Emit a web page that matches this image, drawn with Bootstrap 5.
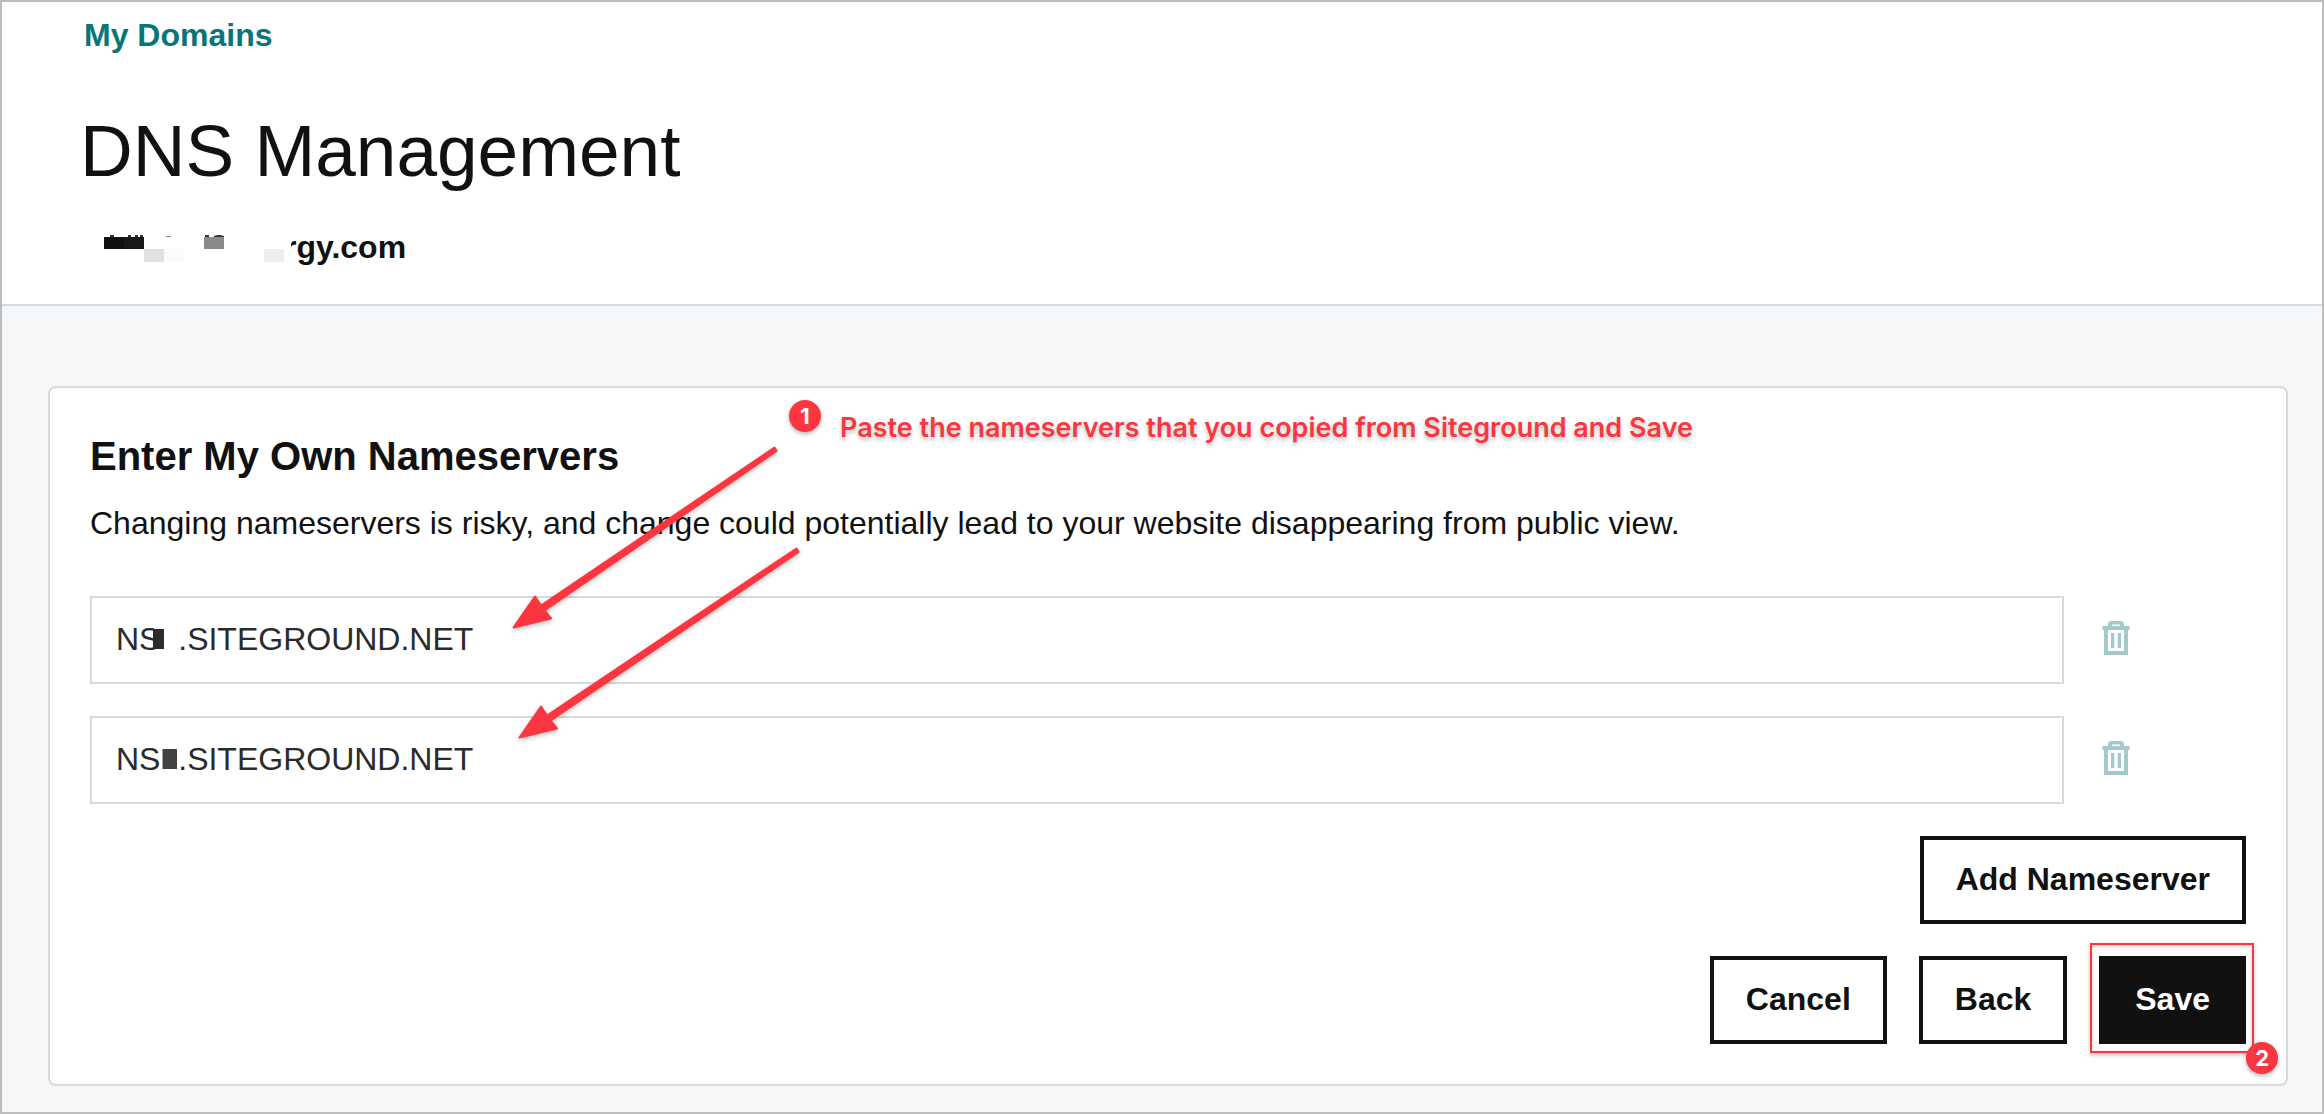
<!DOCTYPE html>
<html lang="en">
<head>
<meta charset="utf-8">
<meta name="viewport" content="width=device-width, initial-scale=1">
<title>DNS Management</title>
<link rel="stylesheet" href="https://cdn.jsdelivr.net/npm/bootstrap@5.3.0/dist/css/bootstrap.min.css">
<style>
  body {
    font-family: "Liberation Sans", Arial, sans-serif;
    font-size: 32px;
    line-height: 48px;
    color: #111;
    background: #f5f7f8;
    border: 2px solid #bdbdbd;
  }
  .page-head { padding: 9px 78px 33px; border-bottom: 2px solid #d4dbe0; }
  .crumb { color: #09757a; padding-left: 4px; }
  .page-title { font-size: 73px; line-height: 88px; font-weight: 400; margin: 48px 0 28px; }
  .domain-name { padding-left: 204px; }
  .domain-mask { left: 3px; top: 0; }
  .page-main { padding: 80px 34px 26px 46px; }
  .ns-card { border: 2px solid #d4dbe0; border-radius: 8px; padding: 40px; }
  .ns-title { font-size: 40px; line-height: 56px; margin-bottom: 15px; }
  .ns-intro { margin-bottom: 49px; }
  .stack { gap: 32px; }
  .ns-field.form-control {
    height: 88px; padding: 0 24px 2px; font-size: 32px; color: #2b2b2b;
    border: 2px solid #d4dbe0; border-radius: 0;
  }
  .digit-mask { left: 60px; top: 26px; }
  .trash-btn { width: 60px; margin: 0 100px 0 22px; }
  .action.btn {
    height: 88px; padding: 0 32px 2px; font-size: 32px; font-weight: 700; line-height: 48px;
    border: 4px solid #111; border-radius: 0; color: #111; background: #fff;
  }
  .action.action-main { background: #111; color: #fff; }
  .save-frame {
    inset: -13px -8px -9px -9px; border: 2px solid #fb3640;
    box-shadow: 0 2px 4px rgba(0,0,0,.25), inset 0 2px 4px rgba(0,0,0,.15);
    pointer-events: none;
  }
  .step {
    width: 32px; height: 32px; border-radius: 50%; background: #fb3640; color: #fff;
    font: 700 22px/32px Inter, sans-serif; text-align: center;
    box-shadow: 0 2px 4px rgba(0,0,0,.3);
  }
  .step-two { left: 147px; top: 86px; }
  .step-one { left: 739px; top: 12px; }
  .note-text {
    left: 790px; top: 20px; font: 600 27px/40px Inter, sans-serif; color: #fb3640;
    text-shadow: 0 3px 4px rgba(0,0,0,.25); white-space: nowrap;
  }
  .arrows { left: 0; top: 0; pointer-events: none; filter: drop-shadow(0 2px 2px rgba(0,0,0,.25)); }
</style>
</head>
<body class="min-vh-100 d-flex flex-column">
<header class="page-head bg-white">
  <a href="#" class="crumb fw-bold text-decoration-none d-block">My Domains</a>
  <h1 class="page-title">DNS Management</h1>
  <div class="domain-name position-relative fw-bold">rgy.com
    <svg class="domain-mask position-absolute" width="208" height="48" viewBox="83 223 208 48" aria-hidden="true">
      <path fill="#fff" d="M83 223h208v48H83z"/>
      <path fill="#333" d="M110 235h4v2h-4zM128 235h3v2h-3zM135 235h3v2h-3zM140 235h3v2h-3zM205 235h4v2h-4zM214 236q5-2 10 0v1h-10z"/>
      <path fill="#888" d="M166 236h5v1h-5z"/>
      <path fill="#111" d="M104 237h20v12h-20z"/>
      <path fill="#181818" d="M124 237h20v12h-20z"/>
      <path fill="#e1e1e1" d="M144 249h20v13h-20z"/>
      <path fill="#fbfbfb" d="M164 249h20v13h-20z"/>
      <path fill="#8a8a8a" d="M204 237h20v12h-20z"/>
      <path fill="#eee" d="M264 249h20v13h-20z"/>
    </svg>
  </div>
</header>
<main class="page-main flex-grow-1">
  <section class="ns-card bg-white position-relative">
    <h2 class="ns-title fw-bold">Enter My Own Nameservers</h2>
    <p class="ns-intro">Changing nameservers is risky, and change could potentially lead to your website disappearing from public view.</p>
    <form class="stack d-flex flex-column">
      <div class="d-flex align-items-center">
        <div class="position-relative flex-grow-1">
          <input class="ns-field form-control" type="text" aria-label="Nameserver 1" value="NS&nbsp;&nbsp;.SITEGROUND.NET">
          <svg class="digit-mask position-absolute" width="30" height="34" viewBox="150 622 30 34" aria-hidden="true">
            <path fill="#fff" d="M153 629h26v20h-26z"/><path fill="#2b2b2b" d="M153 629h11v20h-11z"/>
          </svg>
        </div>
        <button type="button" class="trash-btn btn p-0 border-0 lh-1" aria-label="Delete nameserver 1">
          <svg width="28" height="38" viewBox="0 0 28 38" fill="#a2c9cb" aria-hidden="true"><path fill-rule="evenodd" d="M8.500 0h11q1.500 0 2 1.500L22.500 5H27.500v4H26v25H2V9H.5V5H5.500l1-3.500Q7 0 8.500 0zM10 3.500V5h8V3.500zM6 9v21h16V9zM9 12h3.300v15H9zM15.700 12H19v15h-3.300z"/></svg>
        </button>
      </div>
      <div class="d-flex align-items-center">
        <div class="position-relative flex-grow-1">
          <input class="ns-field form-control" type="text" aria-label="Nameserver 2" value="NS&nbsp;&nbsp;.SITEGROUND.NET">
          <svg class="digit-mask position-absolute" width="30" height="34" viewBox="150 742 30 34" aria-hidden="true">
            <path fill="#424242" d="M162.500 749H177v20h-14.500z"/>
          </svg>
        </div>
        <button type="button" class="trash-btn btn p-0 border-0 lh-1" aria-label="Delete nameserver 2">
          <svg width="28" height="38" viewBox="0 0 28 38" fill="#a2c9cb" aria-hidden="true"><path fill-rule="evenodd" d="M8.500 0h11q1.500 0 2 1.500L22.500 5H27.500v4H26v25H2V9H.5V5H5.500l1-3.500Q7 0 8.500 0zM10 3.500V5h8V3.500zM6 9v21h16V9zM9 12h3.300v15H9zM15.700 12H19v15h-3.300z"/></svg>
        </button>
      </div>
      <div class="d-flex justify-content-end">
        <button type="button" class="action btn">Add Nameserver</button>
      </div>
      <div class="stack d-flex justify-content-end">
        <button type="button" class="action btn">Cancel</button>
        <button type="button" class="action btn">Back</button>
        <div class="position-relative">
          <button type="submit" class="action action-main btn">Save</button>
          <div class="save-frame position-absolute"></div>
          <div class="step step-two position-absolute">2</div>
        </div>
      </div>
    </form>
    <svg class="arrows position-absolute" width="800" height="370" viewBox="50 388 800 370" aria-hidden="true">
      <g fill="#fb3640" stroke="#fb3640" stroke-width="2" stroke-linejoin="round">
        <path d="M513.500 627.500L535 596.500l6 9L774.500 447.500l2 3.500L544.500 610.500l6.500 8z"/>
        <path d="M519.500 737.500L541 706.500l6 9L796.500 548.500l2 3.500L550.500 720.500l6.500 8z"/>
      </g>
    </svg>
    <div class="step step-one position-absolute">1</div>
    <div class="note-text position-absolute">Paste the nameservers that you copied from Siteground and Save</div>
  </section>
</main>
<script src="https://cdn.jsdelivr.net/npm/bootstrap@5.3.0/dist/js/bootstrap.bundle.min.js"></script>
</body>
</html>
